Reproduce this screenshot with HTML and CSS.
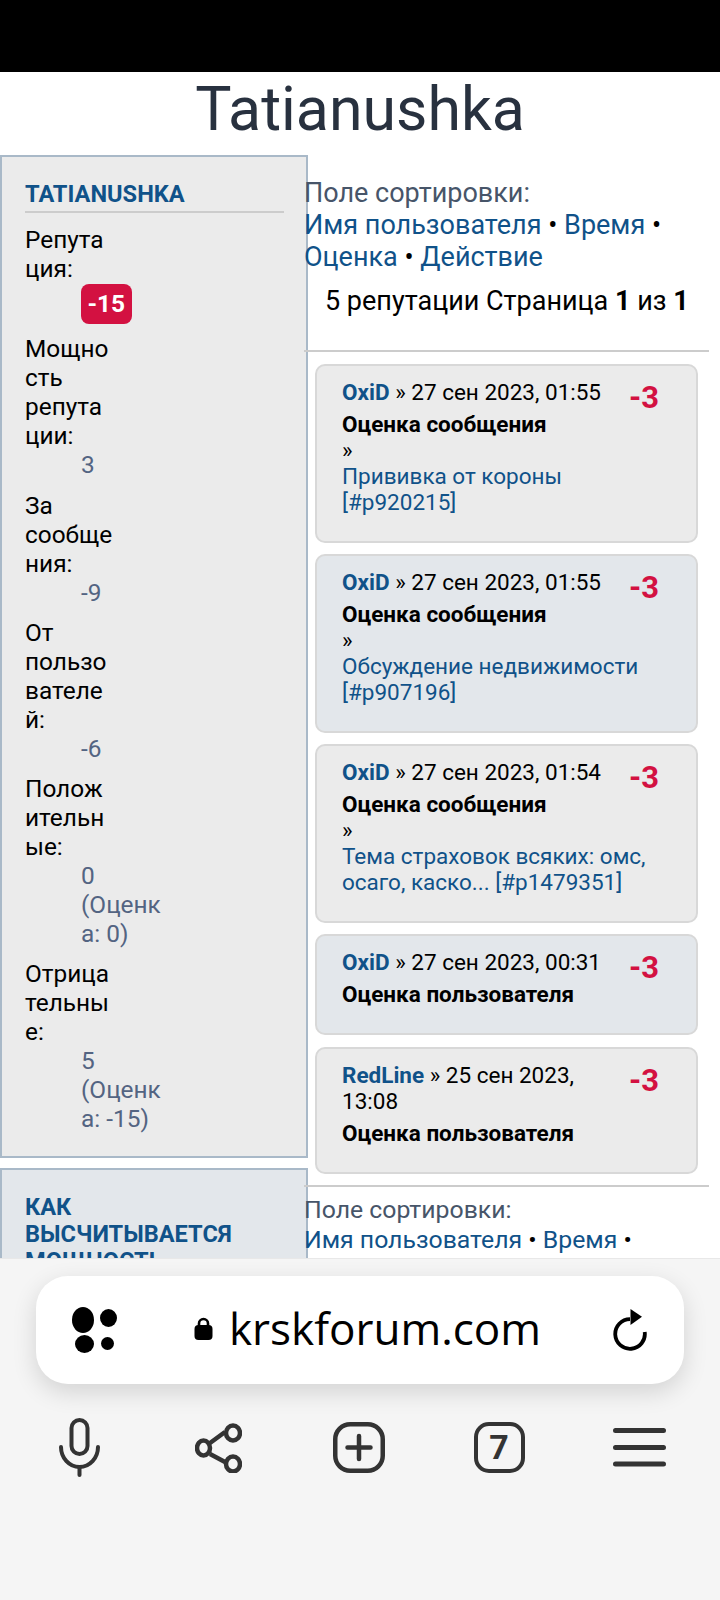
FILE: index.html
```html
<!DOCTYPE html>
<html lang="ru">
<head>
  <meta charset="UTF-8">
  <title>Tatianushka</title>
  <link rel="stylesheet" href="styles.css">
</head>
<body>

  <div class="status-bar"></div>

  <div class="page">
    <h1>Tatianushka</h1>

    <div class="columns">
      <div class="side">
        <div class="panel">
          <h3>Tatianushka</h3>
          <dl>
            <dt>Репутация:</dt>
            <dd><span class="rep-badge">-15</span></dd>
            <dt>Мощность репутации:</dt>
            <dd>3</dd>
            <dt>За сообщения:</dt>
            <dd>-9</dd>
            <dt>От пользователей:</dt>
            <dd>-6</dd>
            <dt>Положительные:</dt>
            <dd>0<br>(Оценка: 0)</dd>
            <dt>Отрицательные:</dt>
            <dd>5<br>(Оценка: -15)</dd>
          </dl>
        </div>
        <div class="panel panel-alt">
          <h3>Как высчитывается мощность</h3>
        </div>
      </div>

      <div class="main">
        <div class="sort">
          <span class="sort-label">Поле сортировки:</span><br>
          <a href="#">Имя пользователя</a> • <a href="#">Время</a> • <a href="#">Оценка</a> • <a href="#">Действие</a>
        </div>
        <div class="pagination">5 репутации Страница <b>1</b> из <b>1</b></div>
        <hr>

        <div class="card">
          <div class="score">-3</div>
          <div class="card-head"><a href="#"><b>OxiD</b></a> » 27 сен 2023, 01:55</div>
          <div class="card-type">Оценка сообщения</div>
          <div class="card-link">»<br><a href="#">Прививка от короны [#p920215]</a></div>
        </div>

        <div class="card card-alt">
          <div class="score">-3</div>
          <div class="card-head"><a href="#"><b>OxiD</b></a> » 27 сен 2023, 01:55</div>
          <div class="card-type">Оценка сообщения</div>
          <div class="card-link">»<br><a href="#">Обсуждение недвижимости [#p907196]</a></div>
        </div>

        <div class="card">
          <div class="score">-3</div>
          <div class="card-head"><a href="#"><b>OxiD</b></a> » 27 сен 2023, 01:54</div>
          <div class="card-type">Оценка сообщения</div>
          <div class="card-link">»<br><a href="#">Тема страховок всяких: омс, осаго, каско... [#p1479351]</a></div>
        </div>

        <div class="card card-alt">
          <div class="score">-3</div>
          <div class="card-head"><a href="#"><b>OxiD</b></a> » 27 сен 2023, 00:31</div>
          <div class="card-type">Оценка пользователя</div>
        </div>

        <div class="card card-last">
          <div class="score">-3</div>
          <div class="card-head"><a href="#"><b>RedLine</b></a> » 25 сен 2023, 13:08</div>
          <div class="card-type">Оценка пользователя</div>
        </div>

        <hr class="hr-bottom">
        <div class="sort sort-small">
          <span class="sort-label">Поле сортировки:</span><br>
          <a href="#">Имя пользователя</a> • <a href="#">Время</a> •
        </div>
      </div>
    </div>
  </div>

  <div class="browser-bar">
    <div class="url-bar">
      <svg class="dots-icon" width="46" height="46" viewBox="0 0 46 46">
        <ellipse cx="11" cy="13" rx="11" ry="13"/>
        <ellipse cx="36.5" cy="11" rx="8.5" ry="9"/>
        <ellipse cx="12.5" cy="37" rx="9.5" ry="9"/>
        <ellipse cx="35.5" cy="36.5" rx="6.5" ry="6.5"/>
      </svg>
      <div class="url">
        <svg width="19" height="23" viewBox="0 0 19 23">
          <path d="M5 11V6.500a4.500 4.500 0 0 1 9 0V11" fill="none" stroke="#000" stroke-width="2.6"/>
          <rect x="0.5" y="8" width="18" height="15" rx="4"/>
        </svg>
        <span>krskforum.com</span>
      </div>
      <svg class="reload-icon" width="36" height="42" viewBox="0 0 36 42">
        <path d="M18 10.200A14.800 14.800 0 1 0 32.700 23" fill="none" stroke="#000" stroke-width="3.8"/>
        <path d="M18.500 0L30 7.700 18.500 16z"/>
      </svg>
    </div>

    <div class="tools">
      <svg class="mic-icon" width="41" height="59" viewBox="0 0 41 59" fill="none" stroke="#333" stroke-width="4" stroke-linecap="round">
        <rect x="12.500" y="2" width="16" height="34" rx="8"/>
        <path d="M2 29a18.500 20 0 0 0 37 0"/>
        <path d="M20.500 49v8"/>
      </svg>
      <svg class="share-icon" width="47" height="50" viewBox="0 0 47 50" fill="none" stroke="#333" stroke-width="4.500">
        <ellipse cx="8.500" cy="25" rx="6.500" ry="7.500"/>
        <ellipse cx="38" cy="10" rx="7" ry="7.500"/>
        <ellipse cx="38" cy="41" rx="7" ry="7.500"/>
        <path d="M15 20l15-11M15 31l15 8"/>
      </svg>
      <svg width="52" height="51" viewBox="0 0 52 51" fill="none" stroke="#333" stroke-width="4.500" stroke-linecap="round">
        <rect x="2.250" y="2.250" width="47.500" height="46.500" rx="15"/>
        <path d="M26 14v23M14.500 25.500h23"/>
      </svg>
      <div class="tab-count">7</div>
      <svg width="53" height="39" viewBox="0 0 53 39" fill="none" stroke="#333" stroke-width="5" stroke-linecap="round">
        <path d="M2.500 2.500h48M2.500 19.500h48M2.500 36h48"/>
      </svg>
    </div>
  </div>

</body>
</html>
```

FILE: styles.css
```css
html, body {
  margin: 0;
  padding: 0;
}

body {
  width: 720px;
  height: 1600px;
  overflow: hidden;
  display: flex;
  flex-direction: column;
  font-family: Roboto, sans-serif;
  background: #fff;
  color: #000;
}

a {
  color: #105289;
  text-decoration: none;
}

.status-bar {
  height: 72px;
  flex: none;
  background: #000;
}

.page {
  flex: 1;
  overflow: hidden;
}

h1 {
  margin: 0;
  height: 83px;
  line-height: 76px;
  text-align: center;
  font-size: 60.8px;
  font-weight: 400;
  color: #28313f;
}

.columns {
  display: flex;
  align-items: flex-start;
}

.side {
  width: 308px;
  flex: none;
}

.panel {
  box-sizing: border-box;
  height: 1003px;
  margin-bottom: 10px;
  padding: 24px 22px 0 23px;
  background: #ebebeb;
  border: 2px solid #a9b9c8;
}

.panel-alt {
  height: 300px;
  background: #e3e7eb;
}

.panel h3 {
  margin: 0 0 12px;
  padding-bottom: 3px;
  border-bottom: 2px solid #ccc;
  font-size: 23.6px;
  line-height: 27px;
  font-weight: 700;
  text-transform: uppercase;
  color: #105289;
}

.panel-alt h3 {
  width: 220px;
  border: none;
}

dl {
  margin: 0;
  font-size: 24.4px;
  line-height: 29px;
}

dt {
  width: 89px;
  margin-top: 11.25px;
  overflow-wrap: break-word;
}

dd {
  width: 88px;
  margin: 0 0 0 56px;
  color: #536482;
  overflow-wrap: break-word;
}

.rep-badge {
  display: inline-block;
  margin: 1px 0 -1px;
  padding: 0 6.5px;
  height: 40px;
  line-height: 40px;
  border-radius: 8px;
  background: #d31141;
  color: #fff;
  font-weight: 700;
}

.main {
  flex: 1;
  min-width: 0;
  margin-left: -4px;
  padding: 22px 11px 0 0;
}

.sort {
  font-size: 27px;
  line-height: 32px;
}

.sort-label {
  color: #475569;
}

.pagination {
  margin: 12px 0 0 21px;
  font-size: 27px;
  line-height: 32px;
  height: 65px;
}

hr {
  height: 2px;
  margin: 0 0 12px;
  border: none;
  background: #ccc;
}

.hr-bottom {
  margin-bottom: 8px;
}

.card {
  box-sizing: border-box;
  margin: 0 11px 11px 11px;
  padding: 13px 20px 26px 25px;
  background: #ebebeb;
  border: 2px solid #d8d8d8;
  border-radius: 10px;
  font-size: 22.5px;
  line-height: 26px;
}

.card-alt {
  background: #e3e7eb;
}

.card-last {
  margin-top: 12px;
}

.score {
  float: right;
  width: 30px;
  margin: 1px 17px 0 12px;
  color: #d31141;
  font-size: 31px;
  line-height: 36px;
  font-weight: 700;
}

.card-type {
  margin-top: 6px;
  font-weight: 700;
}

.sort-small {
  font-size: 24.8px;
  line-height: 30px;
}

.browser-bar {
  height: 342px;
  flex: none;
  box-sizing: border-box;
  padding: 17px 36px 0;
  background: #f5f5f5;
  border-top: 1px solid #e8e8e8;
}

.url-bar {
  height: 108px;
  display: flex;
  align-items: center;
  padding: 0 36px;
  background: #fff;
  border-radius: 32px;
  box-shadow: 0 8px 24px rgba(0, 0, 0, 0.14);
}

.url {
  display: flex;
  align-items: center;
  gap: 16px;
  margin: 0 0 4px 76px;
  font-family: "Open Sans", sans-serif;
  font-size: 44px;
  line-height: 60px;
}

.reload-icon {
  margin-left: auto;
}

.tools {
  display: flex;
  align-items: center;
  justify-content: space-between;
  margin: 34px 18px 0 23px;
}

.mic-icon {
  margin-right: 6px;
}

.share-icon {
  margin-right: 3px;
}

.tab-count {
  box-sizing: border-box;
  width: 51px;
  height: 51px;
  border: 4.5px solid #333;
  border-radius: 15px;
  text-align: center;
  font-size: 34px;
  line-height: 42px;
  font-weight: 700;
  color: #333;
}
```
